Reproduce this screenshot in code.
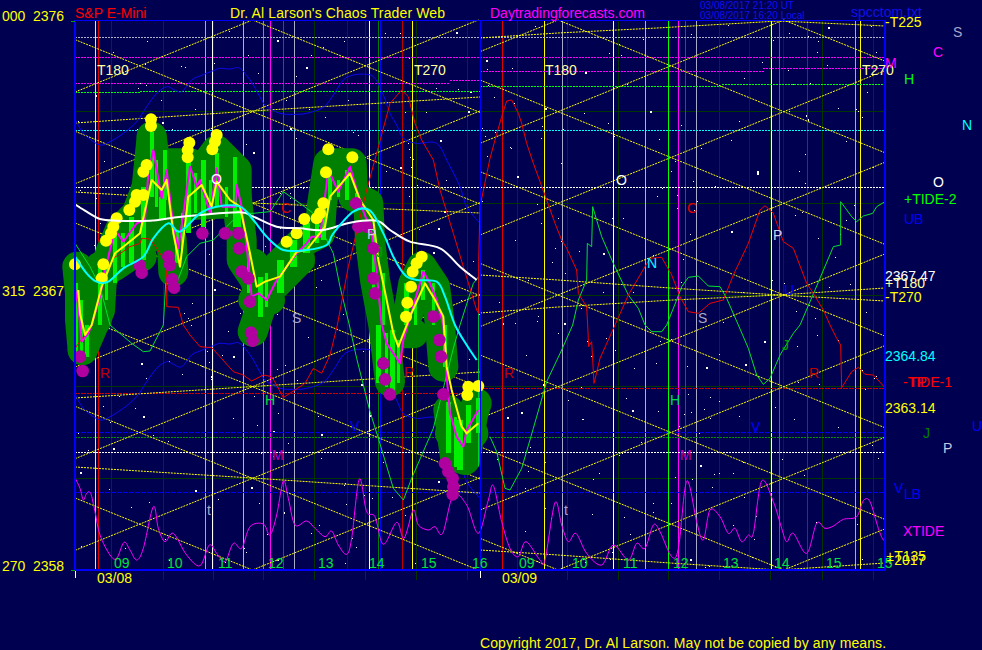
// Chaos Trader Web chart page: one S&P E-Mini chart over two sessions.
// Curve data is kept in 3x image coordinates (as read from zooms), scaled down when drawn.

const TOP = 20;
const BOTTOM = 570;

const scaled = (d: number[], dy = 0) => {
  const out: string[] = [];
  for (let i = 0; i < d.length; i += 2) out.push(`${d[i] / 3},${(d[i + 1] + dy) / 3}`);
  return out.join(' ');
};

// Catmull-Rom through the read points, for the lines that are smooth in the chart
const smooth = (d: number[], dy = 0) => {
  const p: [number, number][] = [];
  for (let i = 0; i < d.length; i += 2) p.push([d[i] / 3, (d[i + 1] + dy) / 3]);
  let out = `M${p[0][0]} ${p[0][1]}`;
  for (let i = 0; i < p.length - 1; i++) {
    const a = p[Math.max(i - 1, 0)];
    const b = p[i];
    const c = p[i + 1];
    const e = p[Math.min(i + 2, p.length - 1)];
    out += ` C${b[0] + (c[0] - a[0]) / 6} ${b[1] + (c[1] - a[1]) / 6} ${c[0] - (e[0] - b[0]) / 6} ${c[1] - (e[1] - b[1]) / 6} ${c[0]} ${c[1]}`;
  }
  return out;
};

// Dotted level as one path of short runs
const dotted = (x1: number, x2: number, y: number) => {
  let out = '';
  for (let x = x1; x < x2; x += 3) out += `M${x} ${y}h2`;
  return out;
};

// Diagonals bounce between the top and bottom of the frame
const lattice = (xc: number, x0: number, x1: number) => {
  const span = BOTTOM - TOP;
  const lines: string[] = [];
  for (let i = 0; i < 12; i++) {
    const pts: string[] = [];
    for (let x = x0; x <= x1; x += 1) {
      let u = (i * span) / 6 + 0.406 * (x - xc);
      u = ((u % (2 * span)) + 2 * span) % (2 * span);
      if (u > span) u = 2 * span - u;
      pts.push(`${x},${TOP + u}`);
    }
    lines.push(pts.join(' '));
  }
  return lines;
};

const stars = (() => {
  const out: { x: number; y: number; s: number }[] = [];
  let seed = 20170308;
  const rnd = () => {
    seed = (seed * 1664525 + 1013904223) % 4294967296;
    return seed / 4294967296;
  };
  for (let i = 0; i < 430; i++) {
    out.push({ x: Math.floor(78 + rnd() * 804), y: Math.floor(23 + rnd() * 545), s: rnd() > 0.88 ? 2 : 1 });
  }
  return out;
})();

const gridX = [111, 163, 213, 263, 314, 365, 416, 467, 517, 567, 618, 668, 719, 770, 822, 873];
const gridY = [111, 203, 295, 386, 478];

const verticals: [number, string][] = [
  [95.5, '#ffff00'], [98.5, '#e00000'], [205.5, '#a8a8c8'], [212.5, '#ffffff'], [243.5, '#00ffff'],
  [263.5, '#00e040'], [270.5, '#ff00ff'], [283.5, '#ff0000'], [294.5, '#a8a8c8'], [347.5, '#0000ff'],
  [369.5, '#ffffff'], [378.5, '#008000'], [380.5, '#0000ff'], [402.5, '#c00000'], [412.5, '#ffff00'],
  [502.5, '#e00000'], [544.5, '#ffff00'], [562.5, '#a8a8c8'], [613.5, '#ffffff'], [645.5, '#00ffff'],
  [668.5, '#00ff00'], [678.5, '#ff00ff'], [685.5, '#ff0000'], [696.5, '#a8a8c8'], [749.5, '#0000ff'],
  [771.5, '#ffffff'], [779.5, '#00a000'], [783.5, '#0000ff'], [807.5, '#c00000'], [855.5, '#a8a8c8'],
  [860.5, '#ffff00'],
];

const levels: [number, number, number, string][] = [
  [75, 885, 37.5, '#b0b0c8'],
  [75, 885, 57.5, '#ff00ff'],
  [75, 450, 83.5, '#ff00ff'],
  [450, 480, 80.5, '#ff00ff'],
  [480, 763, 71.5, '#ff00ff'],
  [763, 885, 68.5, '#ff00ff'],
  [75, 140, 92.5, '#00ff00'],
  [140, 480, 91.5, '#00ff00'],
  [480, 722, 86.5, '#00ff00'],
  [722, 885, 84.5, '#00ff00'],
  [75, 885, 130.5, '#00ffff'],
  [75, 885, 187.5, '#ffffff'],
  [75, 480, 393.5, '#d00000'],
  [480, 885, 388.5, '#d00000'],
  [75, 885, 432.5, '#0000ff'],
  [75, 885, 437.5, '#009000'],
  [75, 885, 452.5, '#ffffff'],
  [75, 885, 492.5, '#0000ff'],
];

const shallow = [
  '75,123 252,111 480,97',
  '75,192 252,203 480,213',
  '75,398 252,386.6 480,372',
  '75,467 252,478 480,493',
  '480,38 558,33 657,28 779,21 885,26',
  '480,275 558,280 670,288 779,295 885,301',
  '480,313 558,307 673,300 779,295 885,288',
  '480,550 558,555 670,563 779,570 885,563',
];

const blue = [225,357,240,385,260,410,300,435,330,425,370,400,410,365,440,320,470,280,500,260,520,268,545,275,575,240,600,228,640,212,660,205,690,207,715,203,735,220,760,255,785,300,800,320,840,340,880,343,920,340,970,322,1000,285,1030,240,1060,225,1100,223,1125,235,1150,285,1170,340,1190,375,1210,415,1250,430,1310,430,1345,490,1380,560,1400,620,1440,670];

const red = [225,1045,275,975,300,880,340,775,390,740,420,730,425,715,450,717,470,745,500,790,500,920,535,922,550,975,570,1005,600,1040,635,1043,660,1070,700,1115,730,1125,755,1143,790,1125,815,1130,830,1155,850,1193,915,1150,940,1105,965,1120,990,1065,1012,975,1045,800,1100,570,1130,460,1170,310,1205,270,1225,290,1245,370,1265,420,1300,480,1320,570,1360,700,1390,800,1430,930,1436,940,1436,785,1440,620,1470,475,1485,420,1505,350,1520,303,1535,300,1555,340,1565,370,1580,430,1600,490,1620,545,1640,600,1665,670,1685,720,1700,745,1730,810,1735,880,1760,920,1763,975,1766,1040,1775,1025,1782,1150,1800,1075,1845,975,1885,885,1935,800,1950,775,1985,772,2015,825,2040,890,2065,935,2095,940,2130,910,2170,900,2200,825,2245,730,2280,630,2295,617,2320,640,2350,725,2380,745,2420,850,2440,880,2470,930,2490,975,2510,1015,2522,1035,2525,1163,2555,1115,2575,1102,2595,1123,2620,1125,2655,1163];

const green = [225,730,270,800,300,860,330,975,395,1030,430,1055,450,1053,490,975,497,850,530,850,560,770,600,730,640,720,680,680,720,640,760,640,810,635,850,575,900,610,940,640,1000,760,1020,860,1048,975,1070,1075,1110,1235,1135,1315,1180,1465,1210,1500,1235,1435,1300,1285,1330,1165,1360,1045,1380,975,1420,850,1436,830,1436,1400];

const green2 = [1470,1310,1490,1355,1515,1465,1530,1470,1565,1405,1600,1285,1640,1145,1685,1050,1718,975,1735,900,1760,840,1762,730,1775,740,1778,620,1805,710,1840,790,1885,885,1915,925,1935,975,1955,995,1985,995,2000,975,2030,900,2045,860,2065,832,2095,828,2125,858,2160,860,2180,895,2215,975,2245,1045,2270,1125,2290,1153,2310,1135,2340,1065,2380,1000,2400,975,2445,870,2500,740,2522,735,2522,605,2555,650,2570,665,2590,648,2618,640,2630,620,2655,605];

const tide = [225,1433,240,1465,250,1500,260,1480,272,1480,285,1535,300,1605,330,1665,350,1675,372,1627,390,1650,410,1680,430,1645,460,1520,475,1585,495,1625,520,1600,560,1665,600,1697,628,1635,650,1660,675,1685,700,1630,725,1645,750,1580,790,1572,810,1605,830,1545,850,1443,865,1495,885,1575,920,1563,945,1585,975,1610,995,1593,1015,1635,1040,1663,1055,1615,1078,1437,1100,1535,1125,1550,1150,1633,1190,1567,1212,1615,1240,1530,1255,1575,1285,1590,1305,1580,1328,1600,1360,1485,1400,1515,1435,1600,1465,1500,1480,1457,1505,1565,1530,1645,1555,1670,1578,1625,1620,1680,1635,1680,1665,1508,1685,1575,1705,1625,1728,1600,1760,1660,1805,1695,1840,1635,1885,1680,1910,1630,1935,1645,1960,1575,1980,1595,2015,1670,2035,1645,2055,1465,2068,1455,2090,1565,2110,1620,2130,1530,2160,1550,2185,1600,2205,1585,2225,1625,2245,1605,2260,1600,2285,1443,2320,1505,2345,1585,2360,1625,2380,1600,2420,1660,2450,1570,2475,1585,2500,1578,2530,1558,2570,1550,2590,1502,2610,1505,2635,1585,2650,1620,2655,1605];

const cyan = [225,770,260,820,290,845,325,845,370,805,430,770,460,715,505,670,540,695,600,640,650,620,720,620,760,660,800,710,850,750,920,750,980,735,1000,700,1060,635,1110,632,1150,700,1180,770,1215,825,1250,840,1310,845,1335,890,1365,975,1400,1035,1430,1080];

const white = [225,613,260,635,300,657,350,662,450,662,520,653,600,645,720,637,760,650,830,680,900,685,970,690,1050,668,1130,662,1170,690,1230,725,1320,745,1380,800,1430,840];

// Dark green band: several thick strokes, they merge into the lobes of the picture
const blobs = [
  [232,800,240,880,240,960,248,1050],
  [248,1050,300,930,305,850,330,760,360,690,410,640,440,560,455,410],
  [300,800,440,720,400,660],
  [300,900,290,960],
  [340,800,400,760],
  [455,410,470,520,510,490,570,490,590,530,650,450,710,510,710,590],
  [440,560,700,560],
  [430,620,700,610],
  [500,640,515,720,520,815],
  [400,700,425,770],
  [710,590,725,720,725,780,765,840,785,915,758,995],
  [760,790,790,830],
  [810,900,760,900],
  [830,850,900,780],
  [800,900,830,800,900,730,960,700,965,620,985,490,1055,490,1060,590,1105,610,1110,720,1125,840,1150,975,1170,1145],
  [1000,540,1040,560],
  [1165,975,1225,940,1240,850,1265,800,1305,860,1320,975,1330,1100],
  [1190,1000,1240,1000],
  [1345,1230,1365,1370,1395,1380,1420,1240,1430,1210],
  [1350,1300,1420,1300],
];

const bars: [number, number, number, number][] = [
  [230,850,1060,9],[245,900,1065,9],[262,975,1070,12],[300,800,975,12],[320,780,900,9],[345,700,850,12],[370,700,800,12],[395,650,790,15],[430,560,780,15],[455,395,590,12],[470,480,620,9],[495,450,600,12],[488,590,660,20],[530,690,790,12],[545,640,760,6],[565,470,700,15],[585,520,640,9],[610,480,680,15],[630,540,640,9],[650,460,620,12],[680,560,650,9],[705,470,640,12],[710,630,680,25],[745,760,880,10],[780,830,950,15],[800,820,920,9],[840,780,880,21],[880,720,800,21],[920,670,760,21],[950,670,730,12],[970,600,720,15],[990,510,600,12],[1015,540,590,9],[1040,510,600,12],[1070,580,610,12],[1120,700,880,10],[1150,820,975,10],[1135,975,1150,15],[1160,1000,1160,9],[1178,990,1190,15],[1195,1020,1150,9],[1220,850,975,15],[1245,900,975,9],[1270,810,900,12],[1300,850,975,9],[1335,975,1100,12],[1345,1205,1360,15],[1365,1250,1400,9],[1380,1260,1410,18],[1405,1215,1330,15],[1435,1195,1300,12],
];

const priceMagenta = [225,865,235,920,245,1025,265,1000,275,975,300,890,315,810,345,690,370,725,410,670,435,660,445,520,460,450,485,595,500,510,520,680,535,745,570,500,590,560,600,540,630,640,650,505,665,620,705,620,710,555,725,620,740,740,755,890,775,880,800,900,830,840,890,760,920,730,935,710,960,710,985,510,1015,575,1050,500,1085,620,1115,700,1130,820,1145,975,1160,1030,1190,1075,1200,1090,1210,1020,1270,815,1290,850,1310,900,1330,975,1340,1130,1350,1240,1370,1310,1390,1340,1400,1290,1435,1230];

const priceYellow = [235,870,240,940,255,1005,275,975,305,860,345,760,370,740,420,700,455,540,485,570,500,540,520,700,540,800,565,590,605,555,635,620,650,545,690,600,720,620,750,760,770,860,795,845,840,830,890,755,920,750,975,680,990,590,1050,520,1080,600,1120,660,1135,780,1160,900,1180,1000,1195,1040,1230,950,1275,850,1305,900,1330,950,1340,1100,1355,1170,1385,1280,1400,1300,1435,1270];

const yellowDots = [453,358,453,378,568,428,563,450,563,472,650,405,645,425,637,448,440,495,430,515,410,585,430,585,405,605,388,630,350,655,340,680,333,700,318,722,225,793,310,793,305,835,985,448,1057,472,978,517,970,610,960,640,913,657,950,655,890,700,860,725,1265,770,1250,790,1238,815,1233,860,1222,908,1218,950,1405,1160,1435,1158,1402,1185];

const purpleDots = [418,795,425,818,505,770,510,795,517,838,522,863,607,700,675,700,715,700,717,745,725,815,745,835,750,905,1068,610,1075,680,1100,680,1120,745,1120,835,1125,880,1300,950,240,1070,248,1113,753,998,758,1022,1150,1090,1155,1138,1170,1183,1318,1020,1323,1070,1330,1183,1335,1390,1345,1415,1358,1435,1360,1460,1358,1483];

const labels: [string, number, number, string][] = [
  ['000', 2, 21, '#ffff00'], ['2376', 33, 21, '#ffff00'],
  ['315', 2, 296, '#ffff00'], ['2367', 33, 296, '#ffff00'],
  ['270', 2, 571, '#ffff00'], ['2358', 33, 571, '#ffff00'],
  ['S&P E-Mini', 75, 18, '#ff0000'],
  ['Daytradingforecasts.com', 490, 18, '#ff00ff'],
  ['spcctom.txt', 851, 17, '#1010e8'],
  ['-T225', 885, 27, '#ffff00'],
  ['T180', 97, 75, '#ffffa0'], ['T270', 414, 75, '#ffffa0'], ['T180', 545, 75, '#ffffa0'], ['T270', 862, 75, '#ffffa0'],
  ['S', 953, 37, '#a8a8c8'], ['C', 933, 57, '#ff00ff'], ['M', 885, 68, '#ff00ff'], ['H', 904, 84, '#00ff00'],
  ['N', 962, 130, '#00ffff'], ['O', 933, 187, '#ffffff'],
  ['+TIDE-2', 904, 204, '#00ff00'], ['UB', 904, 224, '#0000ff'],
  ['2367.47', 885, 281, '#ffffff'], ['+T180', 885, 288, '#ffffa0'], ['-T270', 885, 302, '#ffff00'],
  ['2364.84', 885, 361, '#00ffff'], ['-TIDE-1', 903, 387, '#ff0000'], ['TP', 909, 387, '#ff0000'],
  ['2363.14', 885, 413, '#ffff00'],
  ['J', 923, 438, '#008000'], ['P', 943, 453, '#c8c8e0'], ['U', 972, 431, '#0000ff'],
  ['V', 894, 493, '#0000ff'], ['LB', 904, 499, '#0000ff'], ['XTIDE', 903, 536, '#ff00ff'],
  ['+T135', 886, 561, '#ffff00'], ['+2017', 886, 565, '#ffff00'],
  ['O', 211, 184, '#ffffff'], ['C', 281, 213, '#e00000'], ['P', 367, 239, '#d0d0e8'], ['S', 292, 323, '#a8a8c8'],
  ['R', 100, 378, '#c00000'], ['R', 404, 377, '#c00000'], ['H', 265, 405, '#00e040'], ['M', 272, 460, '#c000c0'],
  ['t', 207, 515, '#a8a8c8'], ['J', 376, 257, '#00a000'], ['V', 350, 431, '#0000ff'],
  ['O', 616, 185, '#ffffff'], ['C', 687, 213, '#e00000'], ['N', 647, 268, '#00ffff'], ['S', 698, 323, '#a8a8c8'],
  ['P', 773, 240, '#d0d0e8'], ['U', 784, 295, '#0000ff'], ['J', 782, 350, '#00a000'],
  ['R', 504, 378, '#c00000'], ['R', 809, 378, '#c00000'], ['H', 670, 405, '#00e040'], ['M', 680, 460, '#c000c0'],
  ['t', 564, 515, '#a8a8c8'], ['V', 751, 432, '#0000ff'],
  ['09', 114, 568, '#00e040'], ['10', 167, 568, '#00e040'], ['11', 218, 568, '#00e040'], ['12', 268, 568, '#00e040'],
  ['13', 318, 568, '#00e040'], ['14', 369, 568, '#00e040'], ['15', 421, 568, '#00e040'], ['16', 472, 568, '#00e040'],
  ['09', 519, 568, '#00e040'], ['10', 572, 568, '#00e040'], ['11', 623, 568, '#00e040'], ['12', 673, 568, '#00e040'],
  ['13', 723, 568, '#00e040'], ['14', 774, 568, '#00e040'], ['15', 826, 568, '#00e040'], ['15', 877, 568, '#00e040'],
  ['03/08', 97, 583, '#ffff00'], ['03/09', 502, 583, '#ffff00'],
];

function Curve({ d, color, width = 1 }: { d: number[]; color: string; width?: number }) {
  return <polyline points={scaled(d)} fill="none" stroke={color} strokeWidth={width} strokeLinejoin="round" />;
}

function Smooth({ d, color, width = 1, dy = 0 }: { d: number[]; color: string; width?: number; dy?: number }) {
  return <path d={smooth(d, dy)} fill="none" stroke={color} strokeWidth={width} />;
}

export default function App() {
  return (
    <div className="h-[650px] w-[982px] overflow-hidden bg-[#000050]">
      <svg
        viewBox="0 0 982 650"
        className="block h-full w-full font-['Liberation_Sans',Arial,sans-serif] text-[14px]"
      >
        {/* Hour grid */}
        <g stroke="#003400" strokeWidth={1} shapeRendering="crispEdges">
          {gridX.map(x => <line key={x} x1={x + 0.5} x2={x + 0.5} y1={TOP} y2={580} />)}
          {gridY.map(y => <line key={y} x1={75} x2={885} y1={y + 0.5} y2={y + 0.5} />)}
        </g>

        {stars.map((s, i) => <rect key={i} x={s.x} y={s.y} width={s.s} height={s.s} fill="#ffffff" />)}

        {/* Planet lines */}
        <g shapeRendering="crispEdges" strokeWidth={1}>
          {verticals.map(([x, c]) => <line key={x} x1={x} x2={x} y1={TOP} y2={BOTTOM} stroke={c} />)}
        </g>
        <g strokeWidth={1} fill="none">
          {levels.map(([x1, x2, y, c], i) => <path key={i} d={dotted(x1, x2, y)} stroke={c} />)}
        </g>

        {/* Yellow lattice */}
        <g fill="none" stroke="#ffff00" strokeWidth={1} strokeDasharray="2 1">
          {lattice(252.5, 75, 480).map((p, i) => <polyline key={i} points={p} />)}
          {lattice(558, 480, 885).map((p, i) => <polyline key={i} points={p} />)}
          {shallow.map((p, i) => <polyline key={i} points={p} />)}
        </g>

        <Smooth d={blue} color="#0a0af0" />
        <Smooth d={blue} color="#0a0af0" dy={825} />

        {/* Price bands */}
        <g fill="none" stroke="#008000" strokeWidth={30} strokeLinecap="round" strokeLinejoin="round">
          {blobs.map((b, i) => <polyline key={i} points={scaled(b)} />)}
        </g>
        <g fill="#00f000" shapeRendering="crispEdges">
          {bars.map(([x, y1, y2, w], i) => (
            <rect key={i} x={(x - w / 2) / 3} y={y1 / 3} width={w / 3} height={(y2 - y1) / 3} />
          ))}
        </g>

        <Curve d={green} color="#00e030" />
        <Curve d={green2} color="#00e030" />
        <Curve d={red} color="#f00000" />
        <Smooth d={tide} color="#ff00ff" />

        <Curve d={priceMagenta} color="#ff00ff" width={2} />
        <Curve d={priceYellow} color="#ffff00" width={2} />

        <g fill="#b000a0">
          {purpleDots.map((v, i) => i % 2 === 0 && <circle key={i} cx={v / 3} cy={purpleDots[i + 1] / 3} r={6.3} />)}
        </g>
        <g fill="#ffff00">
          {yellowDots.map((v, i) => i % 2 === 0 && <circle key={i} cx={v / 3} cy={yellowDots[i + 1] / 3} r={6} />)}
        </g>

        <Smooth d={white} color="#ffffff" width={2} />
        <Smooth d={cyan} color="#00ffff" width={2} />

        {/* Frame */}
        <g stroke="#0000ff" shapeRendering="crispEdges">
          <line x1={75} x2={75} y1={TOP} y2={BOTTOM} strokeWidth={2} />
          <line x1={480.5} x2={480.5} y1={TOP} y2={BOTTOM} strokeWidth={1} />
          <line x1={885} x2={885} y1={TOP} y2={BOTTOM} strokeWidth={2} />
          <line x1={75} x2={885} y1={TOP} y2={TOP} strokeWidth={1} />
          <line x1={75} x2={886} y1={BOTTOM} y2={BOTTOM} strokeWidth={2} />
        </g>
        <g stroke="#ffffff" shapeRendering="crispEdges">
          <line x1={75.5} x2={75.5} y1={571} y2={578} />
          <line x1={480.5} x2={480.5} y1={571} y2={578} />
        </g>
        <g stroke="#00a000" shapeRendering="crispEdges">
          <line x1={71} x2={75} y1={21.5} y2={21.5} />
          <line x1={71} x2={75} y1={570.5} y2={570.5} />
        </g>

        {labels.map(([t, x, y, c], i) => <text key={i} x={x} y={y} fill={c}>{t}</text>)}
        <text x={230} y={18} fill="#ffff00" className="tracking-[0.13px]">Dr. Al Larson's Chaos Trader Web</text>
        <text x={480} y={648} fill="#ffff00" className="tracking-[0.1px]">Copyright 2017, Dr. Al Larson. May not be copied by any means.</text>
        <text x={700} y={9} fill="#1010f0" className="text-[10px]">03/08/2017 21:20 UT</text>
        <text x={700} y={19} fill="#1010f0" className="text-[10px]">03/08/2017 16:20 Local</text>
      </svg>
    </div>
  );
}
